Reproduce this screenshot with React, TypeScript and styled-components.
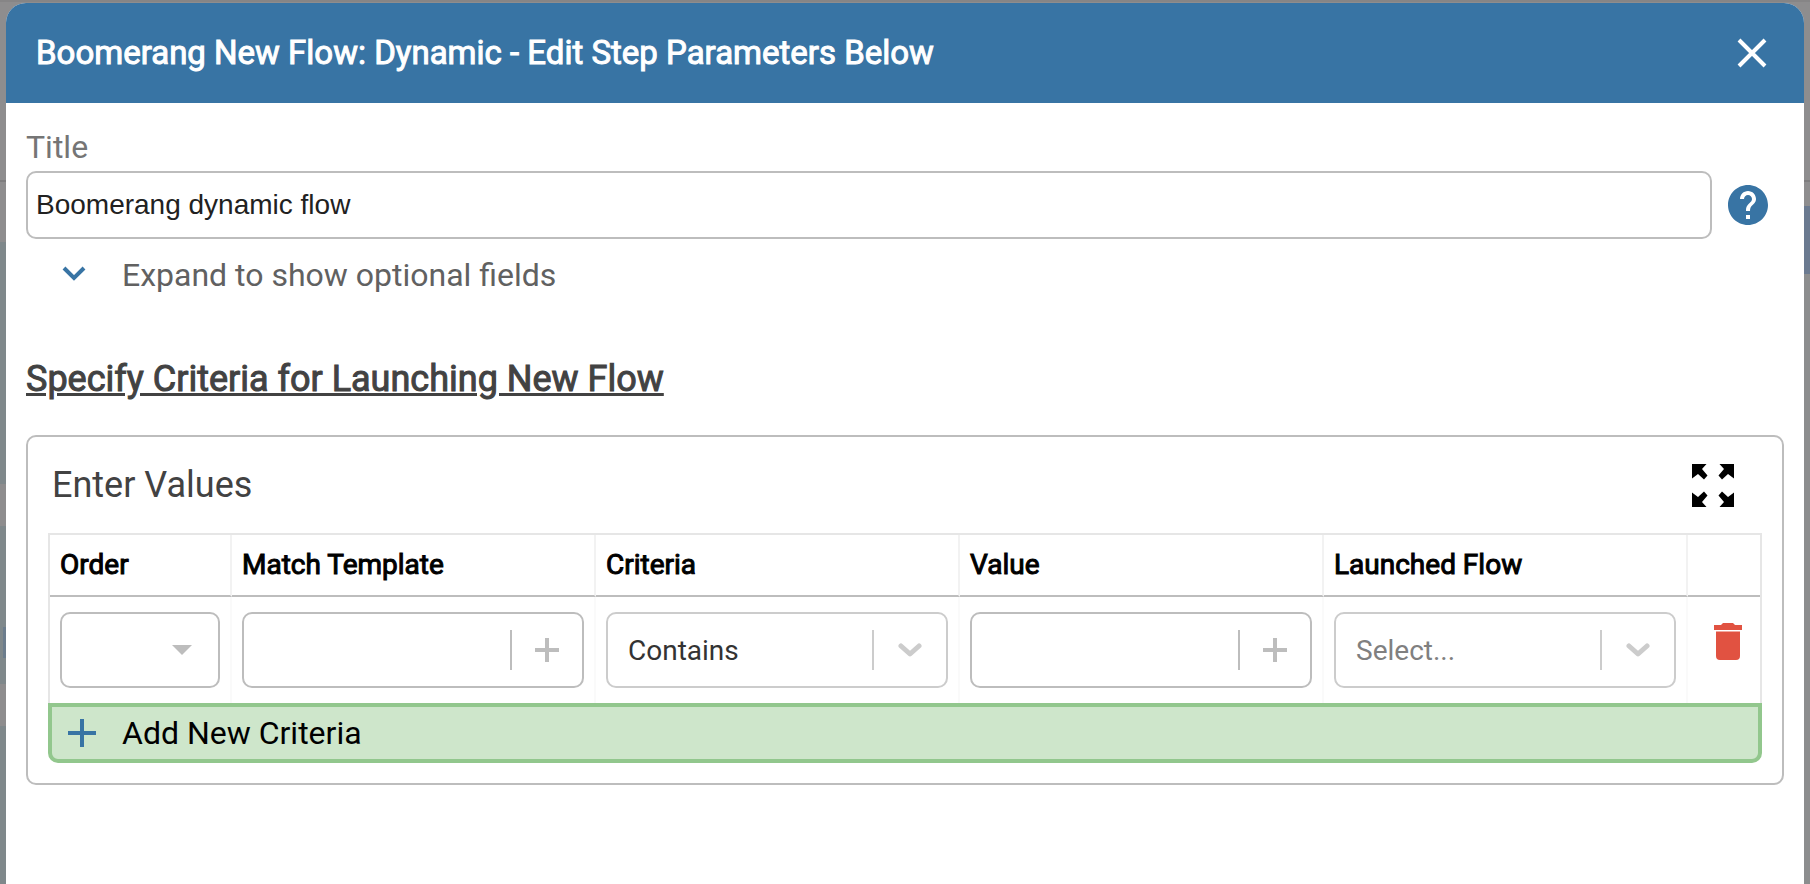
import React, { useState } from "react";
import styled, { createGlobalStyle, css } from "styled-components";

const BLUE = "#3874a4";
const LINE = "#bdbdbd";

const GlobalStyle = createGlobalStyle`
  *, *::before, *::after { box-sizing: border-box; }
  body {
    margin: 0;
    background: #8e8d8e;
    font-family: Roboto, "Liberation Sans", sans-serif;
    color: #000;
  }
  button { font: inherit; color: inherit; background: none; border: 0; padding: 0; cursor: pointer; }
`;

/* Regular cut thickened by a stroke, used for every heading */
const heavy = css`
  font-weight: 400;
  -webkit-text-stroke: 1px currentColor;
`;

const Backdrop = styled.div`
  min-height: 100vh;
  display: grid;
  grid-template-columns: 6px minmax(0, 1fr) 6px;
  background: linear-gradient(#868586 0 2px, #8e8d8e 2px);
`;

/* Dimmed page showing at the left of the dialog: a list of rounded cards */
const LeftGutter = styled.div`
  background:
    linear-gradient(#6c7d8d, #6c7d8d) 3px 627px / 3px 31px no-repeat,
    linear-gradient(
      transparent 0 180px, #7e7d7e 180px 182px, transparent 182px 242px,
      #7f888b 242px 484px, transparent 484px 526px,
      #7f888b 526px 684px, transparent 684px 726px,
      #7f888b 726px
    );
`;

/* Dimmed page showing at the right: a toolbar rule and a blue button */
const RightGutter = styled.div`
  background: linear-gradient(
    transparent 0 180px, #7e7d7e 180px 182px, transparent 182px 206px,
    #6b7a90 206px 274px, #8c8d8e 274px
  );
`;

const Dialog = styled.section`
  min-width: 0;
  margin-top: 3px;
  background: #fff;
  border-radius: 20px 20px 0 0;
`;

const Header = styled.header`
  display: flex;
  align-items: center;
  justify-content: space-between;
  height: 100px;
  padding: 0 32px 0 30px;
  border-radius: 20px 20px 0 0;
  background: ${BLUE};
  color: #fff;
`;

const HeaderTitle = styled.h1`
  ${heavy}
  margin: 0;
  font-size: 33px;
  line-height: 40px;
`;

const IconButton = styled.button`
  display: flex;
  align-items: center;
  justify-content: center;
  flex: none;
`;

const Body = styled.div`
  padding: 24px 20px 40px;
`;

const FieldLabel = styled.label`
  display: block;
  color: #757575;
  font-size: 32px;
  line-height: 40px;
  margin-bottom: 4px;
`;

const FieldRow = styled.div`
  display: flex;
  align-items: center;
  gap: 16px;
  padding-right: 16px;
`;

const TitleInput = styled.input`
  flex: 1;
  min-width: 0;
  height: 68px;
  padding: 0 8px;
  border: 2px solid ${LINE};
  border-radius: 10px;
  background: #fff;
  color: #212121;
  font-family: "Liberation Sans", Arial, sans-serif;
  font-size: 28px;
`;

const ExpandButton = styled.button`
  display: flex;
  align-items: center;
  gap: 36px;
  padding: 16px 0 0 36px;
  color: #616161;
  font-size: 32px;
  line-height: 40px;
`;

const SectionTitle = styled.h2`
  ${heavy}
  margin: 60px 0 32px;
  color: #424242;
  font-size: 36px;
  line-height: 48px;
  text-decoration: underline;
`;

const Panel = styled.section`
  border: 2px solid ${LINE};
  border-radius: 10px;
  padding: 20px;
`;

const PanelHead = styled.div`
  display: flex;
  align-items: center;
  justify-content: space-between;
  height: 56px;
  padding: 0 28px 0 4px;
  margin-bottom: 20px;
`;

const PanelTitle = styled.h3`
  margin: 0;
  font-weight: 400;
  color: #424242;
  font-size: 36px;
  line-height: 48px;
`;

const Table = styled.table`
  width: 100%;
  table-layout: fixed;
  border-spacing: 0;
  border: 2px solid #e6e6e6;
  border-bottom: 0;
`;

const Column = styled.col<{ $width?: number }>`
  width: ${(p) => (p.$width ? `${p.$width}px` : "auto")};
`;

const HeadCell = styled.th`
  ${heavy}
  height: 62px;
  padding: 0 10px;
  text-align: left;
  font-size: 28px;
  line-height: 32px;
  border-bottom: 2px solid ${LINE};
  &:not(:last-child) { border-right: 2px solid #f2f2f2; }
`;

const Cell = styled.td`
  height: 106px;
  padding: 0 10px;
  &:not(:last-child) { border-right: 2px solid #fafafa; }
`;

const Control = styled.div<{ $tone?: string }>`
  display: flex;
  align-items: center;
  height: 76px;
  border: 2px solid ${(p) => p.$tone ?? LINE};
  border-radius: 10px;
`;

const CellInput = styled.input`
  flex: 1;
  min-width: 0;
  height: 100%;
  padding: 0 20px;
  border: 0;
  outline: 0;
  background: transparent;
  font: inherit;
  font-size: 28px;
`;

const CellSelect = styled.select<{ $color?: string }>`
  flex: 1;
  min-width: 0;
  height: 100%;
  padding: 0 20px;
  border: 0;
  outline: 0;
  appearance: none;
  background: transparent;
  color: ${(p) => p.$color ?? "#333"};
  font-family: inherit;
  font-size: 28px;
`;

const Divider = styled.span<{ $tone?: string }>`
  flex: none;
  width: 2px;
  height: 40px;
  background: ${(p) => p.$tone ?? LINE};
`;

const Indicator = styled.span`
  display: flex;
  align-items: center;
  justify-content: center;
  flex: none;
  width: 72px;
  pointer-events: none;
`;

const PlusButton = styled(IconButton)`
  width: 70px;
  height: 100%;
`;

const DeleteButton = styled(IconButton)`
  width: 100%;
  padding: 0 0 18px 8px;
`;

const AddButton = styled.button`
  display: flex;
  align-items: center;
  gap: 26px;
  width: 100%;
  height: 60px;
  padding: 0 16px;
  border: 4px solid #92c78d;
  border-radius: 0 0 10px 10px;
  background: #cee6cb;
  font-size: 32px;
  line-height: 40px;
`;

const MoreIcon = () => (
  <svg width="24" height="19" viewBox="0 0 24 19" aria-hidden="true">
    <path d="M2 2l10 10L22 2" fill="none" stroke={BLUE} strokeWidth="4" />
  </svg>
);

const ChevronIcon = () => (
  <svg width="24" height="16" viewBox="0 0 24 16" aria-hidden="true">
    <path d="M3 4l9 8 9-8" fill="none" stroke="#ccc" strokeWidth="5" strokeLinecap="round" strokeLinejoin="round" />
  </svg>
);

const PlusIcon = ({ size, color }: { size: number; color: string }) => (
  <svg width={size} height={size} viewBox={`0 0 ${size} ${size}`} aria-hidden="true">
    <path d={`M${size / 2} 0v${size}M0 ${size / 2}h${size}`} stroke={color} strokeWidth="4" />
  </svg>
);

const COLUMNS = ["Match Template", "Criteria", "Value", "Launched Flow"];

function SelectControl({ label, options, color }: { label: string; options: string[]; color?: string }) {
  return (
    <Control $tone="#ccc">
      <CellSelect aria-label={label} $color={color}>
        {options.map((o) => <option key={o}>{o}</option>)}
      </CellSelect>
      <Divider $tone="#ccc" />
      <Indicator><ChevronIcon /></Indicator>
    </Control>
  );
}

function TemplateControl({ label }: { label: string }) {
  return (
    <Control>
      <CellInput aria-label={label} />
      <Divider />
      <PlusButton type="button" aria-label={`Insert into ${label}`}><PlusIcon size={24} color={LINE} /></PlusButton>
    </Control>
  );
}

export default function App() {
  const [title, setTitle] = useState("Boomerang dynamic flow");
  return (
    <>
      <GlobalStyle />
      <Backdrop>
        <LeftGutter />
        <Dialog role="dialog" aria-labelledby="dialog-title">
          <Header>
            <HeaderTitle id="dialog-title">Boomerang New Flow: Dynamic - Edit Step Parameters Below</HeaderTitle>
            <IconButton type="button" aria-label="Close">
              <svg width="40" height="40" viewBox="0 0 40 40" aria-hidden="true">
                <path d="M7 7l26 26M33 7L7 33" stroke="#fff" strokeWidth="4" />
              </svg>
            </IconButton>
          </Header>
          <Body>
            <FieldLabel htmlFor="title">Title</FieldLabel>
            <FieldRow>
              <TitleInput id="title" value={title} onChange={(e) => setTitle(e.target.value)} />
              <IconButton type="button" aria-label="Help">
                <svg width="40" height="40" viewBox="2 2 20 20" aria-hidden="true">
                  <path fill={BLUE} d="M12 2C6.480 2 2 6.480 2 12s4.480 10 10 10 10-4.480 10-10S17.520 2 12 2zm1 17h-2v-2h2v2zm2.070-7.750l-.9.920C13.450 12.900 13 13.500 13 15h-2v-.5c0-1.100.450-2.100 1.170-2.830l1.240-1.260c.370-.360.590-.860.590-1.410 0-1.100-.9-2-2-2s-2 .9-2 2H8c0-2.210 1.790-4 4-4s4 1.790 4 4c0 .880-.360 1.680-.930 2.250z" />
                </svg>
              </IconButton>
            </FieldRow>
            <ExpandButton type="button"><MoreIcon />Expand to show optional fields</ExpandButton>
            <SectionTitle>Specify Criteria for Launching New Flow</SectionTitle>
            <Panel>
              <PanelHead>
                <PanelTitle>Enter Values</PanelTitle>
                <IconButton type="button" aria-label="Full screen">
                  <svg width="42" height="43" viewBox="0 0 42 43" aria-hidden="true">
                    {["", "matrix(-1 0 0 1 42 0)", "matrix(1 0 0 -1 0 43)", "matrix(-1 0 0 -1 42 43)"].map((t) => (
                      <path key={t} transform={t} d="M0 0H14.500L10 5L15.500 11.500L12 15.500L6 10L0 14.500Z" />
                    ))}
                  </svg>
                </IconButton>
              </PanelHead>
              <Table>
                <colgroup>
                  <Column $width={182} />
                  {COLUMNS.map((c) => <Column key={c} />)}
                  <Column $width={72} />
                </colgroup>
                <thead>
                  <tr>
                    <HeadCell>Order</HeadCell>
                    {COLUMNS.map((c) => <HeadCell key={c}>{c}</HeadCell>)}
                    <HeadCell aria-label="Actions" />
                  </tr>
                </thead>
                <tbody>
                  <tr>
                    <Cell>
                      <Control>
                        <CellSelect aria-label="Order"><option> </option></CellSelect>
                        <Indicator>
                          <svg width="20" height="10" viewBox="0 0 20 10" aria-hidden="true"><path d="M0 0h20L10 10z" fill={LINE} /></svg>
                        </Indicator>
                      </Control>
                    </Cell>
                    <Cell><TemplateControl label="Match Template" /></Cell>
                    <Cell><SelectControl label="Criteria" options={["Contains"]} /></Cell>
                    <Cell><TemplateControl label="Value" /></Cell>
                    <Cell><SelectControl label="Launched Flow" options={["Select..."]} color="#808080" /></Cell>
                    <Cell>
                      <DeleteButton type="button" aria-label="Delete row">
                        <svg width="28" height="37" viewBox="0 0 28 37" aria-hidden="true">
                          <path fill="#e15241" d="M0 2h7l2-2h10l2 2h7v5H0zM2 8.500h24V33q0 4-4 4H6q-4 0-4-4z" />
                        </svg>
                      </DeleteButton>
                    </Cell>
                  </tr>
                </tbody>
              </Table>
              <AddButton type="button"><PlusIcon size={28} color={BLUE} />Add New Criteria</AddButton>
            </Panel>
          </Body>
        </Dialog>
        <RightGutter />
      </Backdrop>
    </>
  );
}
